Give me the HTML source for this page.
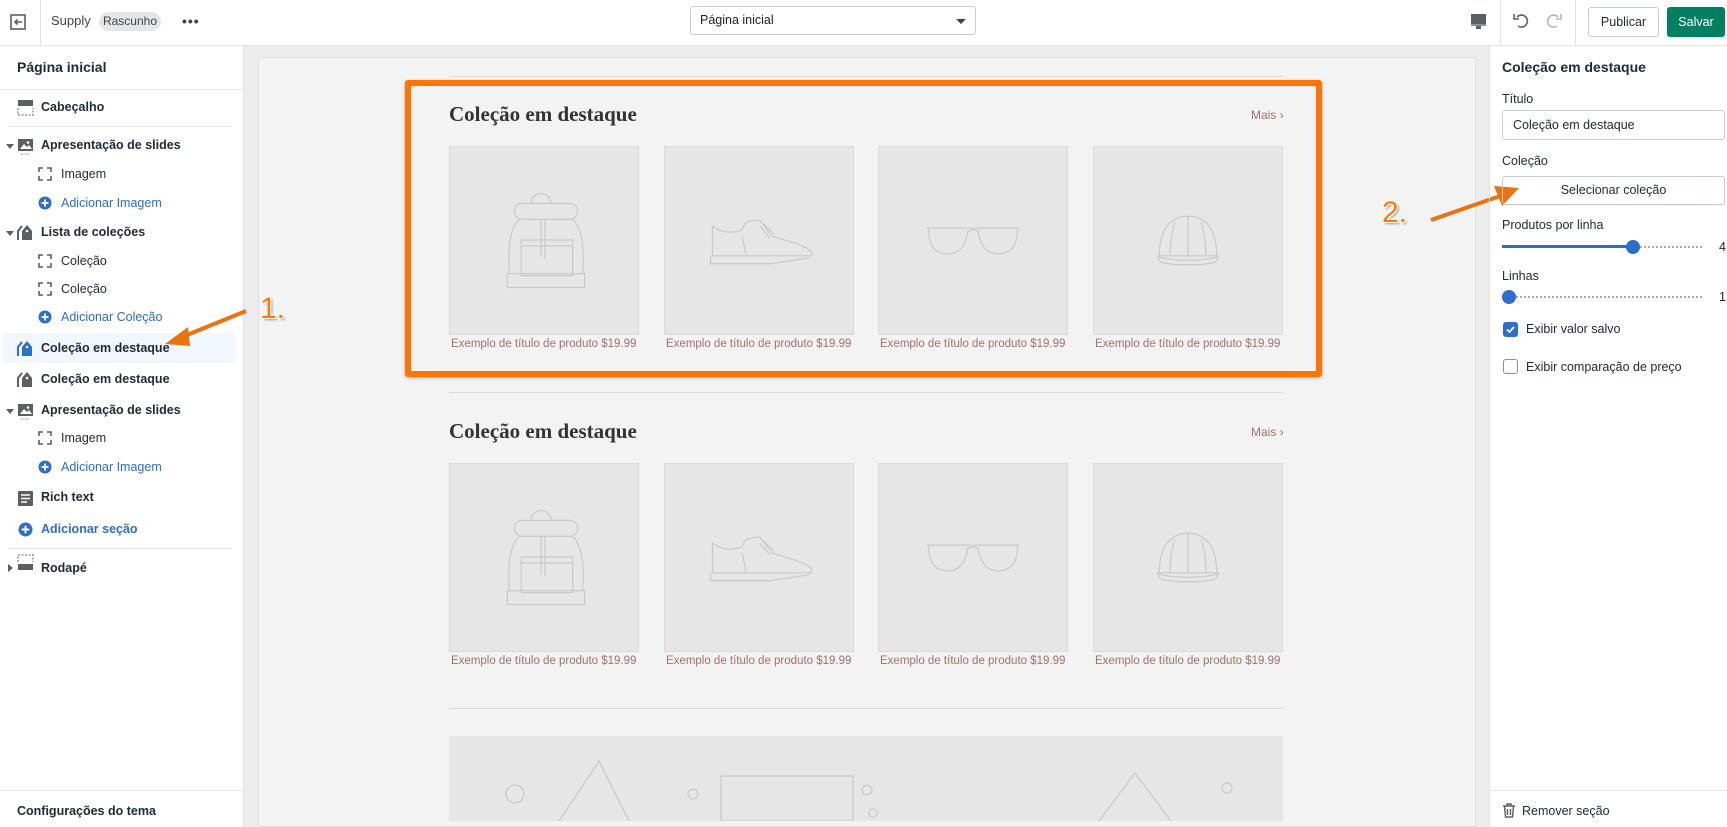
<!DOCTYPE html>
<html><head><meta charset="utf-8"><style>
*{box-sizing:border-box;margin:0;padding:0}
body{width:1727px;height:827px;overflow:hidden;font-family:"Liberation Sans",Arial,sans-serif;background:#fff;position:relative;color:#212b36}
.a{position:absolute}
.t{font-size:12.5px;white-space:nowrap}
.b{font-weight:bold}
.blue{color:#2c6ecb}
.line{position:absolute;height:1px;background:#e1e3e5}
.card{position:absolute;width:190px;height:189px;background:#e6e6e6;border:1px solid #dadada}
.cap{position:absolute;font-size:11.5px;color:#a4706a;white-space:nowrap}
.h{position:absolute;font-family:"Liberation Serif",serif;font-weight:bold;font-size:21px;color:#333}
.mais{position:absolute;font-size:12px;color:#a4706a}
.num{position:absolute;font-size:30px;color:#ff7a00;text-shadow:1px 1px 0 #fff,-1px -1px 0 #fff,1px -1px 0 #fff,-1px 1px 0 #fff,2px 2px 2px #999}
svg.ic{position:absolute}
</style></head><body>
<div class="a" style="left:0;top:0;width:1727px;height:46px;border-bottom:1px solid #e1e3e5;background:#fff"></div>
<div class="a" style="left:40px;top:0;width:1px;height:46px;background:#e1e3e5"></div>
<svg class="ic" style="left:9px;top:13px" width="18" height="18" viewBox="0 0 18 18"><rect x="2" y="2" width="14" height="14" fill="none" stroke="#5c5f62" stroke-width="1.6"/><path d="M13 9H6M8.5 6.5 6 9l2.5 2.5" stroke="#5c5f62" stroke-width="1.6" fill="none"/></svg>
<div class="a t" style="left:51px;top:13px;font-size:13px;color:#444">Supply</div>
<div class="a t" style="left:99px;top:12px;width:62px;height:19px;border-radius:10px;background:#e4e5e7;font-size:12px;line-height:19px;text-align:center;color:#444">Rascunho</div>
<div class="a" style="left:182px;top:13px;font-size:14px;letter-spacing:1px;color:#444;font-weight:bold">•••</div>
<div class="a" style="left:690px;top:6px;width:286px;height:29px;border:1px solid #c4cdd5;border-radius:3px"></div>
<div class="a t" style="left:700px;top:13px;color:#222">Página inicial</div>
<div class="a" style="left:956px;top:19px;border-left:5px solid transparent;border-right:5px solid transparent;border-top:5px solid #444"></div>
<svg class="ic" style="left:1470px;top:13px" width="17" height="17" viewBox="0 0 17 17"><rect x="1" y="1" width="15" height="10" fill="#5c5f62"/><rect x="1" y="11" width="15" height="2" fill="#8c9196"/><rect x="6" y="13" width="5" height="3" fill="#5c5f62"/></svg>
<div class="a" style="left:1500px;top:0;width:1px;height:46px;background:#e1e3e5"></div>
<svg class="ic" style="left:1512px;top:11px" width="20" height="20" viewBox="0 0 20 20"><path d="M5 6a6 6 0 1 1 1 9" stroke="#5c5f62" stroke-width="1.6" fill="none"/><path d="M2 3v5h5" stroke="#5c5f62" stroke-width="1.6" fill="none"/></svg>
<svg class="ic" style="left:1543px;top:11px" width="20" height="20" viewBox="0 0 20 20"><path d="M15 6a6 6 0 1 0 -1 9" stroke="#b5b8bb" stroke-width="1.6" fill="none"/><path d="M18 3v5h-5" stroke="#b5b8bb" stroke-width="1.6" fill="none"/></svg>
<div class="a" style="left:1575px;top:0;width:1px;height:46px;background:#e1e3e5"></div>
<div class="a t" style="left:1588px;top:7px;width:71px;height:30px;border:1px solid #c4cdd5;border-radius:3px;line-height:28px;text-align:center;color:#212b36">Publicar</div>
<div class="a t" style="left:1667px;top:7px;width:58px;height:30px;background:#008060;border-radius:3px;line-height:30px;text-align:center;color:#fff">Salvar</div>

<div class="a" style="left:243px;top:46px;width:1px;height:781px;background:#e1e3e5"></div>
<div class="a t b" style="left:17px;top:59px;font-size:14px">Página inicial</div>
<div class="line" style="left:0;top:89px;width:243px"></div>
<div class="line" style="left:8px;top:126px;width:224px"></div>
<div class="line" style="left:8px;top:548px;width:224px"></div>
<div class="line" style="left:0;top:790px;width:243px"></div>
<div class="a" style="left:2px;top:333px;width:234px;height:30px;background:#f2f7fe;border-radius:3px"></div>

<div class="a t b" style="left:41px;top:100px">Cabeçalho</div>
<div class="a t b" style="left:41px;top:138px">Apresentação de slides</div>
<div class="a t" style="left:61px;top:167px">Imagem</div>
<div class="a t blue" style="left:61px;top:196px">Adicionar Imagem</div>
<div class="a t b" style="left:41px;top:225px">Lista de coleções</div>
<div class="a t" style="left:61px;top:254px">Coleção</div>
<div class="a t" style="left:61px;top:282px">Coleção</div>
<div class="a t blue" style="left:61px;top:310px">Adicionar Coleção</div>
<div class="a t b" style="left:41px;top:341px">Coleção em destaque</div>
<div class="a t b" style="left:41px;top:372px">Coleção em destaque</div>
<div class="a t b" style="left:41px;top:403px">Apresentação de slides</div>
<div class="a t" style="left:61px;top:431px">Imagem</div>
<div class="a t blue" style="left:61px;top:460px">Adicionar Imagem</div>
<div class="a t b" style="left:41px;top:490px">Rich text</div>
<div class="a t b blue" style="left:41px;top:522px">Adicionar seção</div>
<div class="a t b" style="left:41px;top:561px">Rodapé</div>
<div class="a t b" style="left:17px;top:804px">Configurações do tema</div>

<svg class="ic" style="left:17px;top:99px" width="17" height="17" viewBox="0 0 17 17"><rect x="1" y="1" width="15" height="6" fill="#5c5f62"/><path d="M1 9v7h15V9" stroke="#5c5f62" stroke-dasharray="2 1.5" fill="none"/></svg>
<svg class="ic" style="left:17px;top:554px" width="17" height="17" viewBox="0 0 17 17"><rect x="1" y="10" width="15" height="6" fill="#5c5f62"/><path d="M1 8V1h15v7" stroke="#5c5f62" stroke-dasharray="2 1.5" fill="none"/></svg>
<svg class="ic" style="left:17px;top:138px" width="17" height="17" viewBox="0 0 17 17"><rect x="1" y="1" width="15" height="12" fill="#5c5f62"/><path d="M3 11l4-5 3 3 2-2 3 4z" fill="#fff"/><circle cx="11" cy="4.5" r="1.3" fill="#fff"/><path d="M4 16h9" stroke="#5c5f62" stroke-dasharray="1 1.5"/></svg>
<svg class="ic" style="left:17px;top:403px" width="17" height="17" viewBox="0 0 17 17"><rect x="1" y="1" width="15" height="12" fill="#5c5f62"/><path d="M3 11l4-5 3 3 2-2 3 4z" fill="#fff"/><circle cx="11" cy="4.5" r="1.3" fill="#fff"/><path d="M4 16h9" stroke="#5c5f62" stroke-dasharray="1 1.5"/></svg>
<div class="a" style="left:6px;top:144px;border-left:4px solid transparent;border-right:4px solid transparent;border-top:5px solid #5c5f62"></div>
<div class="a" style="left:6px;top:231px;border-left:4px solid transparent;border-right:4px solid transparent;border-top:5px solid #5c5f62"></div>
<div class="a" style="left:6px;top:409px;border-left:4px solid transparent;border-right:4px solid transparent;border-top:5px solid #5c5f62"></div>
<div class="a" style="left:8px;top:564px;border-top:4px solid transparent;border-bottom:4px solid transparent;border-left:5px solid #5c5f62"></div>
<svg class="ic" style="left:17px;top:224px" width="17" height="17" viewBox="0 0 17 17"><path d="M1 16V7l4-5" stroke="#5c5f62" stroke-width="2" fill="none"/><path d="M5 16V7l5-6 5 6v9z" fill="#5c5f62"/><circle cx="10" cy="7" r="1.3" fill="#fff"/></svg>
<svg class="ic" style="left:17px;top:340px" width="17" height="17" viewBox="0 0 17 17"><path d="M1 16V7l4-5" stroke="#2c6ecb" stroke-width="2" fill="none"/><path d="M5 16V7l5-6 5 6v9z" fill="#2c6ecb"/><circle cx="10" cy="7" r="1.3" fill="#fff"/></svg>
<svg class="ic" style="left:17px;top:371px" width="17" height="17" viewBox="0 0 17 17"><path d="M1 16V7l4-5" stroke="#5c5f62" stroke-width="2" fill="none"/><path d="M5 16V7l5-6 5 6v9z" fill="#5c5f62"/><circle cx="10" cy="7" r="1.3" fill="#fff"/></svg>
<svg class="ic" style="left:17px;top:490px" width="17" height="17" viewBox="0 0 17 17"><rect x="1" y="1" width="15" height="15" rx="1" fill="#5c5f62"/><path d="M4 5h9M4 8.5h9M4 12h6" stroke="#fff" stroke-width="1.4"/></svg>
<svg style="position:absolute;width:0;height:0"><defs><symbol id="br" viewBox="0 0 14 14"><path d="M1 5V1h4M9 1h4v4M13 9v4H9M5 13H1V9" stroke="#5c5f62" stroke-width="1.6" fill="none"/></symbol><symbol id="pl" viewBox="0 0 14 14"><circle cx="7" cy="7" r="6.5" fill="#2c6ecb"/><path d="M7 3.5v7M3.5 7h7" stroke="#fff" stroke-width="1.8"/></symbol></defs></svg>
<svg class="ic" style="left:38px;top:167px" width="14" height="14"><use href="#br"/></svg>
<svg class="ic" style="left:38px;top:254px" width="14" height="14"><use href="#br"/></svg>
<svg class="ic" style="left:38px;top:282px" width="14" height="14"><use href="#br"/></svg>
<svg class="ic" style="left:38px;top:431px" width="14" height="14"><use href="#br"/></svg>
<svg class="ic" style="left:38px;top:196px" width="14" height="14"><use href="#pl"/></svg>
<svg class="ic" style="left:38px;top:310px" width="14" height="14"><use href="#pl"/></svg>
<svg class="ic" style="left:38px;top:460px" width="14" height="14"><use href="#pl"/></svg>
<svg class="ic" style="left:18px;top:522px" width="15" height="15"><use href="#pl"/></svg>

<div class="a" style="left:244px;top:46px;width:1245px;height:781px;background:#ececec"></div>
<div class="a" style="left:258px;top:57px;width:1218px;height:770px;background:#f3f3f3;border:1px solid #e0e0e0"></div>
<div class="line" style="left:449px;top:76px;width:834px;background:#dcdcdc"></div>
<div class="line" style="left:449px;top:392px;width:834px;background:#dcdcdc"></div>
<div class="line" style="left:449px;top:708px;width:834px;background:#dcdcdc"></div>
<div class="h" style="left:449px;top:102px">Coleção em destaque</div>
<div class="mais" style="left:1251px;top:108px">Mais ›</div>
<div class="h" style="left:449px;top:419px">Coleção em destaque</div>
<div class="mais" style="left:1251px;top:425px">Mais ›</div>

<svg style="position:absolute;width:0;height:0"><defs>
<symbol id="bag" viewBox="0 0 190 189"><g stroke="#c9c9c9" fill="none" stroke-width="1.2"><path d="M82 57a10 10 0 0 1 20 0"/><rect x="65" y="57" width="64" height="16" rx="8"/><path d="M70 73c-10 10-12 30-10 55M124 73c10 10 12 30 10 55"/><path d="M58 128h78v14H58z"/><rect x="72" y="100" width="52" height="30"/><path d="M72 100v-6h52v6M96 73v40M92 73v38"/></g></symbol>
<symbol id="shoe" viewBox="0 0 190 189"><g stroke="#c9c9c9" fill="none" stroke-width="1.2"><path d="M48 80v30h100c4-8-20-14-40-20l-12-16c-12 0-16 2-18 10-12 4-22 2-30-4z"/><path d="M46 110v8h60l40-6"/><path d="M78 90l4 20M96 80l10 12M100 78l10 10"/></g></symbol>
<symbol id="gl" viewBox="0 0 190 189"><g stroke="#c9c9c9" fill="none" stroke-width="1.2"><path d="M48 82h94M50 82c0 20 8 26 20 26s18-10 20-24M100 84c2 14 8 24 20 24s20-6 20-26"/><path d="M90 86c3-3 7-3 10 0"/></g></symbol>
<symbol id="cap" viewBox="0 0 190 189"><g stroke="#c9c9c9" fill="none" stroke-width="1.2"><path d="M66 110c0-25 10-40 29-40s29 15 29 40z"/><path d="M64 110c10 6 52 6 62 0l-3 6c-10 4-46 4-56 0z"/><path d="M95 70v40M82 76c-4 10-5 22-5 34M108 76c4 10 5 22 5 34"/></g></symbol>
</defs></svg>

<div class="card" style="left:449px;top:146px"><svg width="188" height="187"><use href="#bag"/></svg></div>
<div class="card" style="left:664px;top:146px"><svg width="188" height="187"><use href="#shoe"/></svg></div>
<div class="card" style="left:878px;top:146px"><svg width="188" height="187"><use href="#gl"/></svg></div>
<div class="card" style="left:1093px;top:146px"><svg width="188" height="187"><use href="#cap"/></svg></div>
<div class="cap" style="left:451px;top:338px">Exemplo de título de produto $19.99</div>
<div class="cap" style="left:666px;top:338px">Exemplo de título de produto $19.99</div>
<div class="cap" style="left:880px;top:338px">Exemplo de título de produto $19.99</div>
<div class="cap" style="left:1095px;top:338px">Exemplo de título de produto $19.99</div>

<div class="card" style="left:449px;top:463px"><svg width="188" height="187"><use href="#bag"/></svg></div>
<div class="card" style="left:664px;top:463px"><svg width="188" height="187"><use href="#shoe"/></svg></div>
<div class="card" style="left:878px;top:463px"><svg width="188" height="187"><use href="#gl"/></svg></div>
<div class="card" style="left:1093px;top:463px"><svg width="188" height="187"><use href="#cap"/></svg></div>
<div class="cap" style="left:451px;top:655px">Exemplo de título de produto $19.99</div>
<div class="cap" style="left:666px;top:655px">Exemplo de título de produto $19.99</div>
<div class="cap" style="left:880px;top:655px">Exemplo de título de produto $19.99</div>
<div class="cap" style="left:1095px;top:655px">Exemplo de título de produto $19.99</div>

<div class="a" style="left:449px;top:736px;width:834px;height:85px;background:#e6e6e6"></div>
<svg class="ic" style="left:449px;top:736px" width="834" height="85"><g stroke="#c9c9c9" fill="none" stroke-width="1.3"><circle cx="66" cy="58" r="9"/><path d="M110 85l40-60 30 60"/><circle cx="244" cy="58" r="5"/><rect x="272" y="40" width="132" height="45"/><circle cx="418" cy="54" r="5"/><circle cx="424" cy="77" r="4"/><path d="M650 85l36-48 36 48"/><circle cx="778" cy="52" r="5"/></g></svg>

<div class="a" style="left:405px;top:80px;width:917px;height:297px;border:6px solid #ff7500;border-radius:3px;box-shadow:0 1px 3px rgba(0,0,0,.3)"></div>
<div class="num" style="left:260px;top:292px">1.</div>
<svg class="ic" style="left:160px;top:305px" width="90" height="45"><path d="M86 6 22 32" stroke="#e8730f" stroke-width="4"/><path d="M5 39 28 22 30 41z" fill="#e8730f"/></svg>
<div class="num" style="left:1382px;top:196px">2.</div>
<svg class="ic" style="left:1428px;top:182px" width="95" height="42"><path d="M3 38 78 12" stroke="#e8730f" stroke-width="4"/><path d="M91 6 66 4 74 24z" fill="#e8730f"/></svg>

<div class="a" style="left:1489px;top:46px;width:1px;height:781px;background:#e1e3e5"></div>
<div class="a t b" style="left:1502px;top:59px;font-size:14px">Coleção em destaque</div>
<div class="a t" style="left:1502px;top:92px">Título</div>
<div class="a" style="left:1502px;top:110px;width:223px;height:30px;border:1px solid #c4cdd5;border-radius:3px"></div>
<div class="a t" style="left:1513px;top:118px">Coleção em destaque</div>
<div class="a t" style="left:1502px;top:154px">Coleção</div>
<div class="a t" style="left:1502px;top:176px;width:223px;height:29px;border:1px solid #c4cdd5;border-radius:3px;text-align:center;line-height:27px;color:#212b36;box-shadow:0 1px 0 rgba(0,0,0,.05)">Selecionar coleção</div>
<div class="a t" style="left:1502px;top:218px">Produtos por linha</div>
<div class="a" style="left:1502px;top:245px;width:131px;height:3px;background:#2c6ecb"></div>
<div class="a" style="left:1633px;top:246px;width:69px;border-top:2px dotted #aaa"></div>
<div class="a" style="left:1626px;top:240px;width:14px;height:14px;border-radius:50%;background:#2c6ecb"></div>
<div class="a t" style="left:1719px;top:240px">4</div>
<div class="a t" style="left:1502px;top:269px">Linhas</div>
<div class="a" style="left:1509px;top:296px;width:193px;border-top:2px dotted #aaa"></div>
<div class="a" style="left:1502px;top:290px;width:14px;height:14px;border-radius:50%;background:#2c6ecb"></div>
<div class="a t" style="left:1719px;top:290px">1</div>
<div class="a" style="left:1503px;top:322px;width:15px;height:15px;border-radius:3px;background:#2c6ecb"></div>
<svg class="ic" style="left:1503px;top:322px" width="15" height="15"><path d="M4 7.5l2.5 2.5L11 5" stroke="#fff" stroke-width="1.8" fill="none"/></svg>
<div class="a t" style="left:1526px;top:322px">Exibir valor salvo</div>
<div class="a" style="left:1503px;top:359px;width:15px;height:15px;border-radius:3px;border:1px solid #8c9196;background:#fff"></div>
<div class="a t" style="left:1526px;top:360px">Exibir comparação de preço</div>
<div class="line" style="left:1489px;top:790px;width:238px"></div>
<svg class="ic" style="left:1502px;top:803px" width="14" height="15" viewBox="0 0 14 15"><path d="M1 3h12M5 3V1h4v2M2.5 3l1 11h7l1-11M5.5 6v6M8.5 6v6" stroke="#5c5f62" stroke-width="1.4" fill="none"/></svg>
<div class="a t" style="left:1522px;top:804px">Remover seção</div>
</body></html>
